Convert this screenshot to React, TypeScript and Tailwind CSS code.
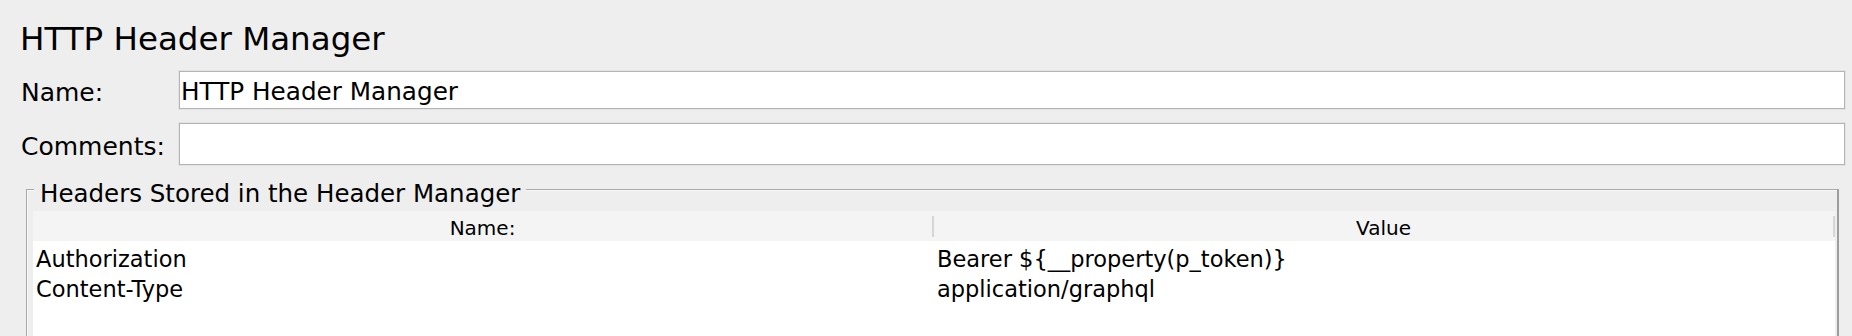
const rows = [
  { name: "Authorization", value: "Bearer ${__property(p_token)}" },
  { name: "Content-Type", value: "application/graphql" },
];

export default function App() {
  return (
    <div className="h-[336px] overflow-hidden bg-[#eeeeee] text-black font-['DejaVu_Sans',Verdana,sans-serif]">
      {/* Title */}
      <div className="pt-[23px] pl-[20px] h-[55px] text-[32.5px] leading-[32px]">HTTP Header Manager</div>

      {/* Name */}
      <div className="mt-[15px] flex h-[40px] pl-[21px] pr-[6px]">
        <div className="w-[157px] flex items-center pt-[4px] text-[25px] leading-none">Name:</div>
        <div className="flex-1 border border-[#e3e3e3]">
          <div className="h-full flex items-center pt-[4px] pl-px border border-[#b5b5b5] bg-white text-[24.7px] leading-none">
            HTTP Header Manager
          </div>
        </div>
      </div>

      {/* Comments */}
      <div className="mt-[12px] flex h-[44px] pl-[21px] pr-[6px]">
        <div className="w-[157px] flex items-center pt-[4px] text-[25px] leading-none">Comments:</div>
        <div className="flex-1 border border-[#e3e3e3]">
          <div className="h-full border border-[#b5b5b5] bg-white" />
        </div>
      </div>

      {/* Headers group */}
      <div className="mt-[23px] ml-[26px] mr-[13px] h-[170px] border-l border-t border-[#a9a9a9] border-r-2 border-r-[#9d9d9d] shadow-[inset_1px_1px_0_#f8f8f8]">
        <div className="-mt-[8px] ml-[7px] w-fit px-[6px] bg-[#eeeeee] text-[24.5px] leading-[24px]">
          Headers Stored in the Header Manager
        </div>

        <div className="mt-[5px] ml-[6px] mr-[2px]">
          {/* table header */}
          <div className="flex h-[30px] bg-[#f4f4f4] text-[20px] leading-none">
            <div className="flex-1 flex items-center justify-center pt-[4px]">Name:</div>
            <div className="w-[2px] h-[21px] self-center bg-[#d6d6d6]" />
            <div className="flex-1 flex items-center justify-center pt-[4px]">Value</div>
            <div className="w-[2px] h-[21px] self-center bg-[#d6d6d6]" />
          </div>

          {/* table body */}
          <div className="h-[200px] bg-white pt-[3px] text-[22.5px] leading-none">
            {rows.map((r) => (
              <div key={r.name} className="flex h-[30px] items-center">
                <div className="flex-1 pl-[3px]">{r.name}</div>
                <div className="w-[2px]" />
                <div className="flex-1 pl-[3px]">{r.value}</div>
                <div className="w-[2px]" />
              </div>
            ))}
          </div>
        </div>
      </div>
    </div>
  );
}
